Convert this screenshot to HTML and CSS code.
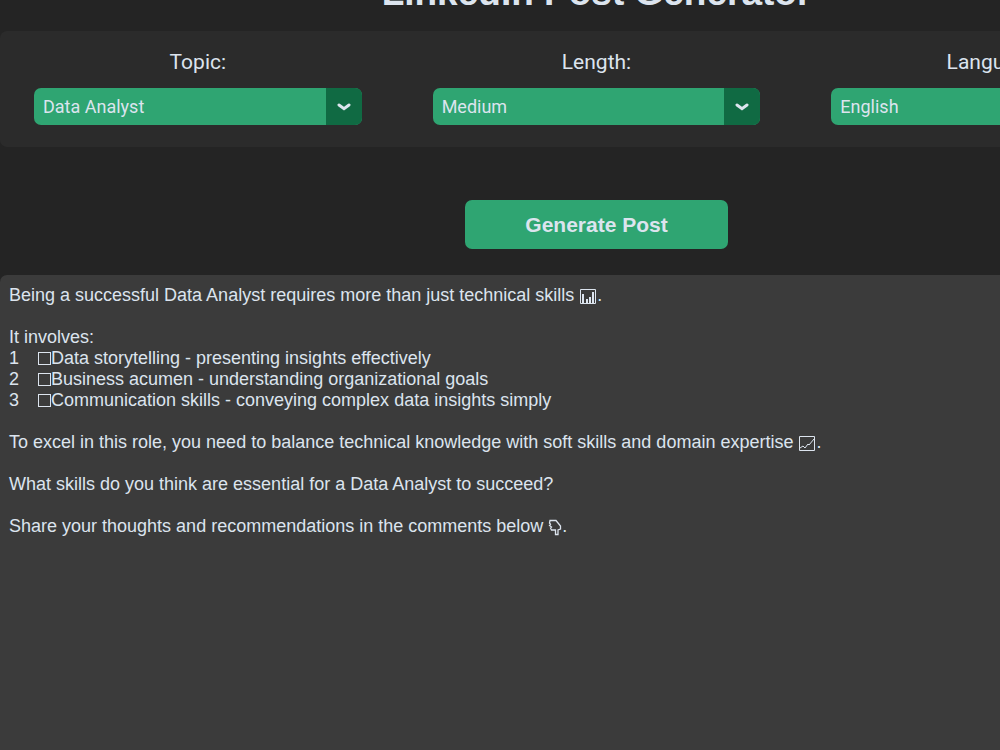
FILE: index.html
```html
<!DOCTYPE html>
<html lang="en">
<head>
<meta charset="utf-8">
<title>LinkedIn Post Generator</title>
<link rel="stylesheet" href="styles.css">
</head>
<body>
<main class="app">
  <h1 class="title">LinkedIn Post Generator</h1>

  <form class="options">
    <div class="field">
      <label class="field-label" for="topic">Topic:</label>
      <div class="picker">
        <select class="picker-select" id="topic"><option>Data Analyst</option></select>
        <span class="picker-arrow"><svg width="14" height="8" viewBox="0 0 14 8"><path d="M2 2 7 5.600 12 2"/></svg></span>
      </div>
    </div>
    <div class="field">
      <label class="field-label" for="length">Length:</label>
      <div class="picker">
        <select class="picker-select" id="length"><option>Medium</option></select>
        <span class="picker-arrow"><svg width="14" height="8" viewBox="0 0 14 8"><path d="M2 2 7 5.600 12 2"/></svg></span>
      </div>
    </div>
    <div class="field">
      <label class="field-label" for="language">Language:</label>
      <div class="picker">
        <select class="picker-select" id="language"><option>English</option></select>
        <span class="picker-arrow"><svg width="14" height="8" viewBox="0 0 14 8"><path d="M2 2 7 5.600 12 2"/></svg></span>
      </div>
    </div>
  </form>

  <button class="generate" type="button">Generate Post</button>

  <section class="output">
    <p>Being a successful Data Analyst requires more than just technical skills <svg class="emoji" width="18" height="16" viewBox="0 0 18 16"><path d="M1.500 .5h15v14h-15z"/><path class="bars" d="M4 14V5M8 14v-4M11 14V8M14 14V3"/></svg>.</p>
    <div class="block">
      <p>It involves:</p>
      <ol class="points">
        <li class="point"><span class="num">1</span><span class="box"></span>Data storytelling - presenting insights effectively</li>
        <li class="point"><span class="num">2</span><span class="box"></span>Business acumen - understanding organizational goals</li>
        <li class="point"><span class="num">3</span><span class="box"></span>Communication skills - conveying complex data insights simply</li>
      </ol>
    </div>
    <p>To excel in this role, you need to balance technical knowledge with soft skills and domain expertise <svg class="emoji" width="18" height="16" viewBox="0 0 18 16"><path d="M1.500 .5h15v14h-15z"/><path d="M2 12l3-2 2 2 3-4 1 1 5-6"/></svg>.</p>
    <p>What skills do you think are essential for a Data Analyst to succeed?</p>
    <p>Share your thoughts and recommendations in the comments below <svg class="emoji" width="14" height="17" viewBox="0 0 14 17"><path class="hand" d="M2 1.500h6L12.500 7v3l-2.500 1v4.500H7.500V11H3.500L2.500 9l1-1-2-1.500 1-1.200L1.500 4z"/></svg>.</p>
  </section>
</main>
</body>
</html>
```
FILE: styles.css
```css
body {
  margin: 0;
  background: #242424;
  color: #dce4ee;
  font-family: "Liberation Sans", Arial, sans-serif;
  overflow: hidden;
}

.app {
  display: flex;
  flex-direction: column;
  align-items: stretch;
  box-sizing: border-box;
  min-width: 1193px;
  min-height: calc(100vh + 60px);
  margin-top: -28px;
}

.title {
  margin: 0 0 17px;
  font-size: 37px;
  line-height: 42px;
  text-align: center;
}

.options {
  display: grid;
  grid-template-columns: repeat(3, 1fr);
  gap: 71px;
  padding: 16px 34px 22px;
  border-radius: 7px;
  background: #2b2b2b;
  font-family: Roboto, sans-serif;
}

.field {
  display: flex;
  flex-direction: column;
  gap: 11px;
}

.field-label {
  font-size: 21px;
  line-height: 30px;
  text-align: center;
}

.picker {
  display: grid;
  grid-template-columns: 1fr 36px;
  height: 37px;
  border-radius: 7px;
  overflow: hidden;
  background: #2fa572;
}

.picker-select {
  grid-area: 1 / 1 / 2 / 3;
  appearance: none;
  padding: 0 9px;
  border: 0;
  background: transparent;
  color: #dce4ee;
  font: 18px Roboto, sans-serif;
}

.picker-arrow {
  grid-area: 1 / 2;
  display: grid;
  place-items: center;
  background: #106a43;
  pointer-events: none;
}

.picker-arrow path {
  fill: none;
  stroke: #dce4ee;
  stroke-width: 3;
  stroke-linecap: round;
}

.generate {
  align-self: center;
  margin: 53px 0 26px;
  padding: 0 60px;
  border: 0;
  border-radius: 7px;
  background: #2fa572;
  color: #dce4ee;
  font: bold 21px/49px "Liberation Sans", Arial, sans-serif;
}

.output {
  display: flex;
  flex: 1;
  flex-direction: column;
  gap: 21px;
  padding: 10px 9px;
  border-radius: 7px;
  background: #3b3b3b;
  font-size: 18px;
  line-height: 21px;
}

.output p {
  margin: 0;
}

.points {
  margin: 0;
  padding: 0;
  list-style: none;
}

.point {
  display: flex;
  align-items: center;
}

.num {
  width: 29px;
}

.box {
  box-sizing: border-box;
  width: 13px;
  height: 13px;
  border: 1px solid #dce4ee;
}

.emoji {
  vertical-align: -4px;
  fill: none;
  stroke: #dce4ee;
}

.bars {
  stroke-width: 2;
}

.hand {
  stroke-width: 1.300;
}
```
